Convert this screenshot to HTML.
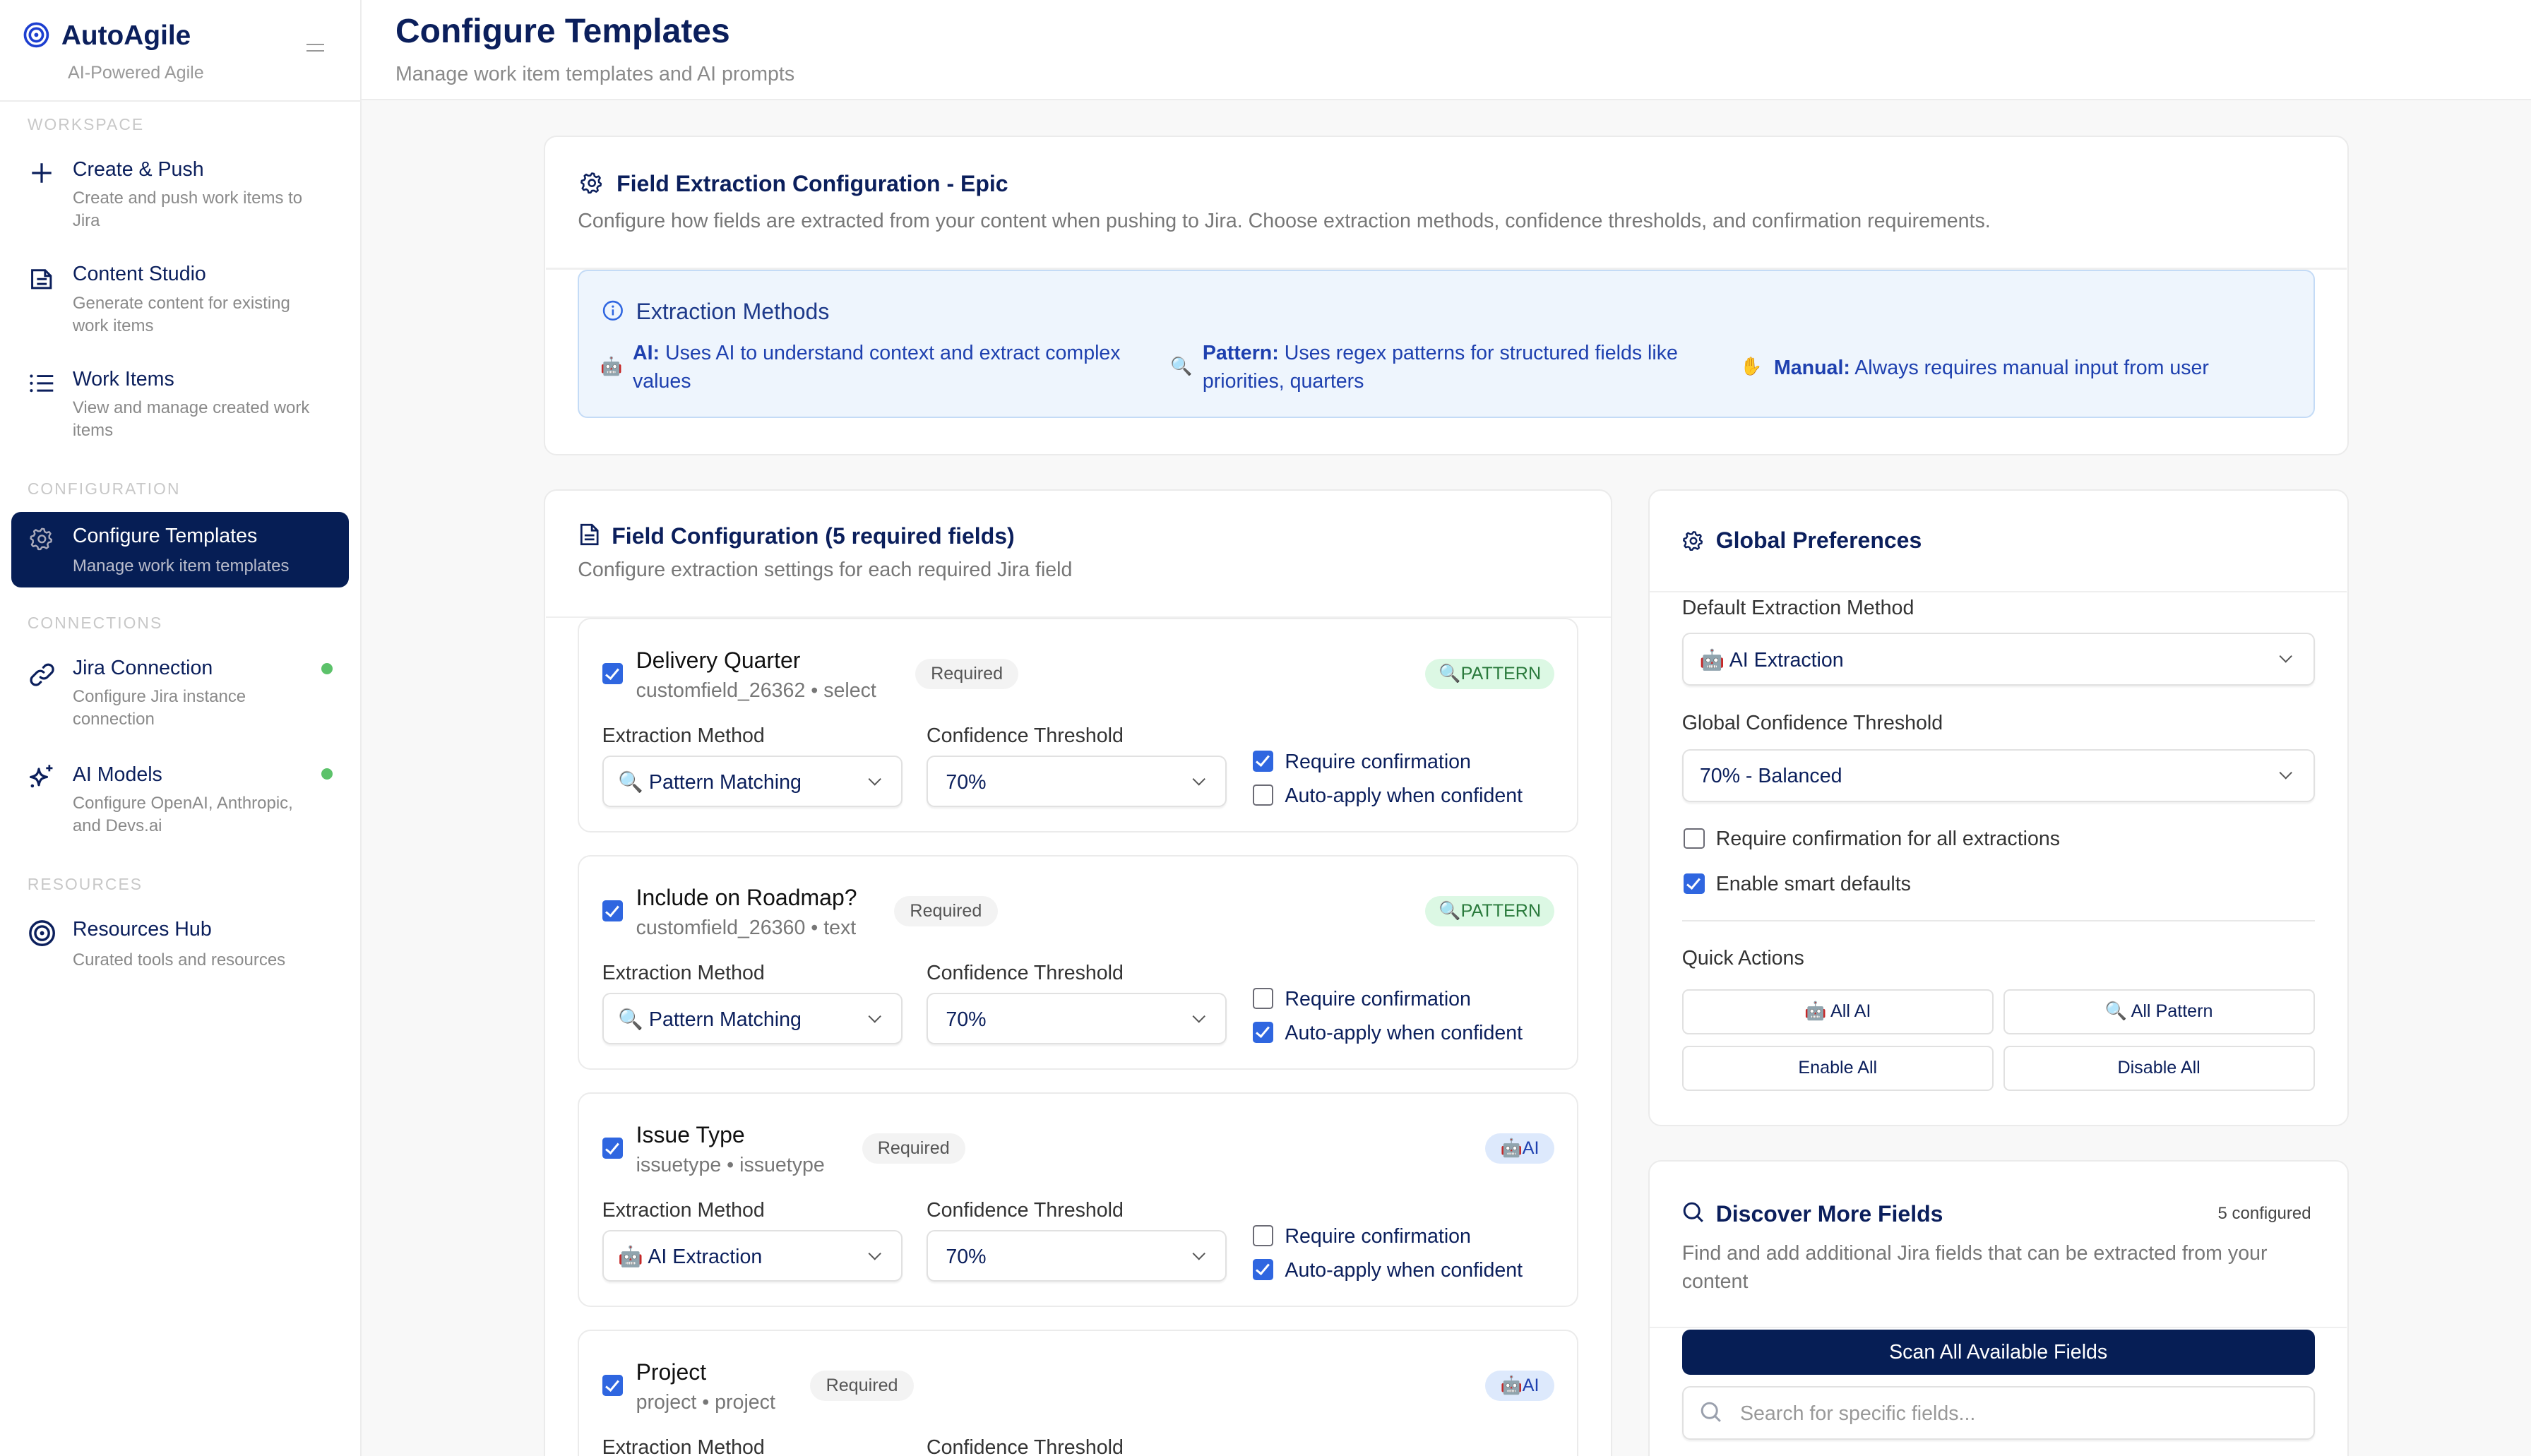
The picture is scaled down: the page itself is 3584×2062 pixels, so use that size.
<!DOCTYPE html>
<html><head><meta charset="utf-8">
<style>
html{margin:0;padding:0;width:3584px;height:2062px;overflow:hidden}
body{margin:0;padding:0;width:1568px;height:902px;overflow:hidden;position:relative;background:#f8f8f8;font-family:"Liberation Sans",sans-serif;zoom:2.2857;color:#0b1f5c}
.a{position:absolute;white-space:nowrap;line-height:16px}
.box{position:absolute;box-sizing:border-box}
.card{position:absolute;background:#fff;border:1px solid #ebebeb;border-radius:8px;box-sizing:border-box}
.gray{color:#8a8a8a}
.cb{position:absolute;width:13px;height:13px;box-sizing:border-box;border-radius:2px}
.on{background:#2f66e0}
.on::after{content:"";position:absolute;left:4px;top:1.5px;width:3px;height:7px;border:solid #fff;border-width:0 1.6px 1.6px 0;transform:rotate(40deg)}
.off{border:1.3px solid #6b6b75;background:#fff}
.sel{position:absolute;background:#fff;border:1px solid #e1e1e1;border-radius:5px;box-sizing:border-box;box-shadow:0 1px 1px rgba(0,0,0,.06)}
.chev{position:absolute;width:5px;height:5px;border:solid #555;border-width:0 1.3px 1.3px 0;transform:rotate(45deg)}
.pill{position:absolute;border-radius:10px;font-size:11px;line-height:19px;text-align:center}
.lbl{font-size:10px;letter-spacing:.9px;color:#c8c8c8}
.btn{position:absolute;background:#fff;border:1px solid #e1e1e1;border-radius:4px;box-sizing:border-box;text-align:center;font-size:11px;line-height:26px;color:#0b1f5c}
#wrap{position:absolute;left:0;top:0;width:1568px;height:902px;overflow:hidden}
</style></head><body><div id="wrap">

<!-- sidebar -->
<div class="box" style="left:0;top:0;width:224px;height:902px;background:#fff;border-right:1px solid #ececec"></div>
<div class="box" style="left:0;top:62px;width:224px;height:1px;background:#ededed"></div>
<svg class="box" style="left:14px;top:13px" width="17" height="17" viewBox="0 0 17 17"><circle cx="8.5" cy="8.5" r="7" fill="none" stroke="#1d3fd0" stroke-width="1.6"/><circle cx="8.5" cy="8.5" r="4" fill="none" stroke="#1d3fd0" stroke-width="1.6"/><circle cx="8.5" cy="8.5" r="1.3" fill="#1d3fd0"/></svg>
<div class="a" style="left:38px;top:13px;font-size:17px;line-height:18px;font-weight:bold;color:#0b1f5c">AutoAgile</div>
<div class="a gray" style="left:42px;top:37px;font-size:11px;color:#999">AI-Powered Agile</div>
<div class="box" style="left:190px;top:27px;width:11px;height:1px;background:#999"></div>
<div class="box" style="left:190px;top:31px;width:11px;height:1px;background:#999"></div>

<div class="a lbl" style="left:17px;top:69px">WORKSPACE</div>
<svg class="box" style="left:19px;top:100px" width="14" height="14"><path d="M7 1v12M1 7h12" stroke="#0b1f5c" stroke-width="1.4"/></svg>
<div class="a" style="left:45px;top:97px;font-size:12.5px">Create &amp; Push</div>
<div class="a gray" style="left:45px;top:116px;font-size:10.5px;line-height:14px;white-space:normal;width:155px">Create and push work items to Jira</div>
<svg class="box" style="left:18px;top:165px" width="16" height="16" viewBox="0 0 16 16"><path d="M2 2.5h8l3.5 3.5v7.5h-11.5z M10 2.5v3.5h3.5 M5 8h6 M5 11h6" fill="none" stroke="#0b1f5c" stroke-width="1.3"/></svg>
<div class="a" style="left:45px;top:162px;font-size:12.5px">Content Studio</div>
<div class="a gray" style="left:45px;top:181px;font-size:10.5px;line-height:14px;white-space:normal;width:155px">Generate content for existing work items</div>
<svg class="box" style="left:18px;top:231px" width="16" height="14"><circle cx="1.5" cy="2" r=".9" fill="#0b1f5c"/><circle cx="1.5" cy="6.5" r=".9" fill="#0b1f5c"/><circle cx="1.5" cy="11" r=".9" fill="#0b1f5c"/><path d="M5 2h10M5 6.5h10M5 11h10" stroke="#0b1f5c" stroke-width="1.3"/></svg>
<div class="a" style="left:45px;top:227px;font-size:12.5px">Work Items</div>
<div class="a gray" style="left:45px;top:246px;font-size:10.5px;line-height:14px;white-space:normal;width:160px">View and manage created work items</div>

<div class="a lbl" style="left:17px;top:295px">CONFIGURATION</div>
<div class="box" style="left:7px;top:317px;width:209px;height:47px;background:#061e55;border-radius:6px"></div>
<svg class="box" style="left:18px;top:326px" width="16" height="16" viewBox="0 0 24 24"><path d="M12 2.5l2 .3.6 2.4 1.7 1 2.4-.8 1.3 1.6-1.2 2.2.1 2 2 1.4-.3 2-2.4.7-1 1.7.7 2.4-1.6 1.3-2.2-1.2-2 .1-1.4 2h-2l-.7-2.4-1.7-1-2.4.7-1.3-1.6 1.2-2.2-.1-2-2-1.4.3-2 2.4-.7 1-1.7-.7-2.4 1.6-1.3 2.2 1.2 2-.1z" fill="none" stroke="#aab" stroke-width="1.6" stroke-linejoin="round"/><circle cx="12" cy="12" r="3.2" fill="none" stroke="#aab" stroke-width="1.6"/></svg>
<div class="a" style="left:45px;top:324px;font-size:12.5px;color:#fff">Configure Templates</div>
<div class="a" style="left:45px;top:343px;font-size:10.5px;color:#b9bccb">Manage work item templates</div>

<div class="a lbl" style="left:17px;top:378px">CONNECTIONS</div>
<svg class="box" style="left:17px;top:409px" width="18" height="18" viewBox="0 0 18 18"><path d="M8 10.5a3 3 0 0 0 4.2 0l3-3a3 3 0 0 0-4.2-4.2l-1.2 1.2 M10 7.5a3 3 0 0 0-4.2 0l-3 3a3 3 0 0 0 4.2 4.2l1.2-1.2" fill="none" stroke="#0b1f5c" stroke-width="1.4" stroke-linecap="round"/></svg>
<div class="a" style="left:45px;top:406px;font-size:12.5px">Jira Connection</div>
<div class="a gray" style="left:45px;top:425px;font-size:10.5px;line-height:14px;white-space:normal;width:150px">Configure Jira instance connection</div>
<div class="box" style="left:199px;top:411px;width:7px;height:7px;border-radius:50%;background:#5cc26a"></div>
<svg class="box" style="left:17px;top:473px" width="18" height="18" viewBox="0 0 18 18"><path d="M7 3.5c.6 3.3 1.6 4.3 5 5-3.4.6-4.4 1.6-5 5-.6-3.4-1.6-4.4-5-5 3.4-.7 4.4-1.7 5-5z" fill="none" stroke="#0b1f5c" stroke-width="1.4" stroke-linejoin="round"/><path d="M13.5 1v4M11.5 3h4" stroke="#0b1f5c" stroke-width="1.2"/><circle cx="3" cy="14" r="1" fill="#0b1f5c"/></svg>
<div class="a" style="left:45px;top:472px;font-size:12.5px">AI Models</div>
<div class="a gray" style="left:45px;top:491px;font-size:10.5px;line-height:14px;white-space:normal;width:152px">Configure OpenAI, Anthropic, and Devs.ai</div>
<div class="box" style="left:199px;top:476px;width:7px;height:7px;border-radius:50%;background:#5cc26a"></div>

<div class="a lbl" style="left:17px;top:540px">RESOURCES</div>
<svg class="box" style="left:17px;top:569px" width="18" height="18" viewBox="0 0 18 18"><circle cx="9" cy="9" r="7.3" fill="none" stroke="#0b1f5c" stroke-width="1.5"/><circle cx="9" cy="9" r="4.2" fill="none" stroke="#0b1f5c" stroke-width="1.5"/><circle cx="9" cy="9" r="1.3" fill="#0b1f5c"/></svg>
<div class="a" style="left:45px;top:568px;font-size:12.5px">Resources Hub</div>
<div class="a gray" style="left:45px;top:587px;font-size:10.5px">Curated tools and resources</div>

<!-- header -->
<div class="box" style="left:224px;top:0;width:1344px;height:62px;background:#fff;border-bottom:1px solid #ececec"></div>
<div class="a" style="left:245px;top:8px;font-size:21px;line-height:24px;font-weight:bold">Configure Templates</div>
<div class="a" style="left:245px;top:38px;font-size:12.5px;color:#8a8a8a">Manage work item templates and AI prompts</div>

<!-- card 1 -->
<div class="card" style="left:337px;top:84px;width:1118px;height:198px"></div>
<div class="box" style="left:338px;top:166px;width:1116px;height:1px;background:#efefef"></div>
<svg class="box" style="left:359px;top:106px" width="15" height="15" viewBox="0 0 24 24"><path d="M12 2.5l2 .3.6 2.4 1.7 1 2.4-.8 1.3 1.6-1.2 2.2.1 2 2 1.4-.3 2-2.4.7-1 1.7.7 2.4-1.6 1.3-2.2-1.2-2 .1-1.4 2h-2l-.7-2.4-1.7-1-2.4.7-1.3-1.6 1.2-2.2-.1-2-2-1.4.3-2 2.4-.7 1-1.7-.7-2.4 1.6-1.3 2.2 1.2 2-.1z" fill="none" stroke="#0b1f5c" stroke-width="1.8" stroke-linejoin="round"/><circle cx="12" cy="12" r="3.2" fill="none" stroke="#0b1f5c" stroke-width="1.8"/></svg>
<div class="a" style="left:382px;top:106px;font-size:14px;font-weight:bold">Field Extraction Configuration - Epic</div>
<div class="a" style="left:358px;top:129px;font-size:12.5px;color:#777">Configure how fields are extracted from your content when pushing to Jira. Choose extraction methods, confidence thresholds, and confirmation requirements.</div>
<div class="box" style="left:358px;top:167px;width:1076px;height:92px;background:#eef5fd;border:1px solid #c4dbf6;border-radius:6px"></div>
<svg class="box" style="left:373px;top:186px" width="13" height="13"><circle cx="6.5" cy="6.5" r="5.6" fill="none" stroke="#2f66e0" stroke-width="1.1"/><path d="M6.5 5.8v3.6" stroke="#2f66e0" stroke-width="1.1"/><circle cx="6.5" cy="4" r=".7" fill="#2f66e0"/></svg>
<div class="a" style="left:394px;top:185px;font-size:14px;color:#1e3a8a">Extraction Methods</div>
<div class="a" style="left:372px;top:219px;font-size:11px">🤖</div>
<div class="a" style="left:392px;top:210px;font-size:12.5px;line-height:17.5px;color:#1e40af;white-space:normal;width:330px"><b>AI:</b> Uses AI to understand context and extract complex values</div>
<div class="a" style="left:725px;top:219px;font-size:11px">🔍</div>
<div class="a" style="left:745px;top:210px;font-size:12.5px;line-height:17.5px;color:#1e40af;white-space:normal;width:320px"><b>Pattern:</b> Uses regex patterns for structured fields like priorities, quarters</div>
<div class="a" style="left:1078px;top:219px;font-size:11px">✋</div>
<div class="a" style="left:1099px;top:220px;font-size:12.5px;color:#1e40af"><b>Manual:</b> Always requires manual input from user</div>

<!-- card 2 -->
<div class="card" style="left:337px;top:303px;width:662px;height:620px"></div>
<div class="box" style="left:338px;top:382px;width:660px;height:1px;background:#efefef"></div>
<svg class="box" style="left:359px;top:324px" width="12" height="14" viewBox="0 0 12 14"><path d="M1 1h6.5l3.5 3.5v8.5h-10z M7.5 1v3.5h3.5 M3 7.5h6 M3 10h6" fill="none" stroke="#0b1f5c" stroke-width="1.2"/></svg>
<div class="a" style="left:379px;top:324px;font-size:14px;font-weight:bold">Field Configuration (5 required fields)</div>
<div class="a" style="left:358px;top:345px;font-size:12.5px;color:#777">Configure extraction settings for each required Jira field</div>

<!-- field cards -->
<div class="card" style="left:358px;top:383px;width:620px;height:133px"></div>
<div class="cb on" style="left:373px;top:411px"></div>
<div class="a" style="left:394px;top:401px;font-size:14px;color:#111">Delivery Quarter</div>
<div class="a" style="left:394px;top:420px;font-size:12.5px;color:#777">customfield_26362 • select</div>
<div class="pill" style="left:567px;top:408px;width:64px;background:#f3f3f3;color:#555">Required</div>
<div class="pill" style="left:883px;top:408px;width:80px;background:#dcf8e4;color:#2a7a3c">🔍PATTERN</div>
<div class="a" style="left:373px;top:448px;font-size:12.5px;color:#333">Extraction Method</div>
<div class="a" style="left:574px;top:448px;font-size:12.5px;color:#333">Confidence Threshold</div>
<div class="sel" style="left:373px;top:468px;width:186px;height:32px"></div><div class="a" style="left:383px;top:477px;font-size:12.5px">🔍 Pattern Matching</div><div class="chev" style="left:539px;top:480px"></div>
<div class="sel" style="left:574px;top:468px;width:186px;height:32px"></div><div class="a" style="left:586px;top:477px;font-size:12.5px">70%</div><div class="chev" style="left:740px;top:480px"></div>
<div class="cb on" style="left:776px;top:465px"></div><div class="a" style="left:796px;top:464px;font-size:12.5px">Require confirmation</div>
<div class="cb off" style="left:776px;top:486px"></div><div class="a" style="left:796px;top:485px;font-size:12.5px">Auto-apply when confident</div>

<div class="card" style="left:358px;top:530px;width:620px;height:133px"></div>
<div class="cb on" style="left:373px;top:558px"></div>
<div class="a" style="left:394px;top:548px;font-size:14px;color:#111">Include on Roadmap?</div>
<div class="a" style="left:394px;top:567px;font-size:12.5px;color:#777">customfield_26360 • text</div>
<div class="pill" style="left:554px;top:555px;width:64px;background:#f3f3f3;color:#555">Required</div>
<div class="pill" style="left:883px;top:555px;width:80px;background:#dcf8e4;color:#2a7a3c">🔍PATTERN</div>
<div class="a" style="left:373px;top:595px;font-size:12.5px;color:#333">Extraction Method</div>
<div class="a" style="left:574px;top:595px;font-size:12.5px;color:#333">Confidence Threshold</div>
<div class="sel" style="left:373px;top:615px;width:186px;height:32px"></div><div class="a" style="left:383px;top:624px;font-size:12.5px">🔍 Pattern Matching</div><div class="chev" style="left:539px;top:627px"></div>
<div class="sel" style="left:574px;top:615px;width:186px;height:32px"></div><div class="a" style="left:586px;top:624px;font-size:12.5px">70%</div><div class="chev" style="left:740px;top:627px"></div>
<div class="cb off" style="left:776px;top:612px"></div><div class="a" style="left:796px;top:611px;font-size:12.5px">Require confirmation</div>
<div class="cb on" style="left:776px;top:633px"></div><div class="a" style="left:796px;top:632px;font-size:12.5px">Auto-apply when confident</div>

<div class="card" style="left:358px;top:677px;width:620px;height:133px"></div>
<div class="cb on" style="left:373px;top:705px"></div>
<div class="a" style="left:394px;top:695px;font-size:14px;color:#111">Issue Type</div>
<div class="a" style="left:394px;top:714px;font-size:12.5px;color:#777">issuetype • issuetype</div>
<div class="pill" style="left:534px;top:702px;width:64px;background:#f3f3f3;color:#555">Required</div>
<div class="pill" style="left:920px;top:702px;width:43px;background:#dde9fc;color:#1e40af">🤖AI</div>
<div class="a" style="left:373px;top:742px;font-size:12.5px;color:#333">Extraction Method</div>
<div class="a" style="left:574px;top:742px;font-size:12.5px;color:#333">Confidence Threshold</div>
<div class="sel" style="left:373px;top:762px;width:186px;height:32px"></div><div class="a" style="left:383px;top:771px;font-size:12.5px">🤖 AI Extraction</div><div class="chev" style="left:539px;top:774px"></div>
<div class="sel" style="left:574px;top:762px;width:186px;height:32px"></div><div class="a" style="left:586px;top:771px;font-size:12.5px">70%</div><div class="chev" style="left:740px;top:774px"></div>
<div class="cb off" style="left:776px;top:759px"></div><div class="a" style="left:796px;top:758px;font-size:12.5px">Require confirmation</div>
<div class="cb on" style="left:776px;top:780px"></div><div class="a" style="left:796px;top:779px;font-size:12.5px">Auto-apply when confident</div>

<div class="card" style="left:358px;top:824px;width:620px;height:110px"></div>
<div class="cb on" style="left:373px;top:852px"></div>
<div class="a" style="left:394px;top:842px;font-size:14px;color:#111">Project</div>
<div class="a" style="left:394px;top:861px;font-size:12.5px;color:#777">project • project</div>
<div class="pill" style="left:502px;top:849px;width:64px;background:#f3f3f3;color:#555">Required</div>
<div class="pill" style="left:920px;top:849px;width:43px;background:#dde9fc;color:#1e40af">🤖AI</div>
<div class="a" style="left:373px;top:889px;font-size:12.5px;color:#333">Extraction Method</div>
<div class="a" style="left:574px;top:889px;font-size:12.5px;color:#333">Confidence Threshold</div>

<!-- card 3 -->
<div class="card" style="left:1021px;top:303px;width:434px;height:395px"></div>
<div class="box" style="left:1022px;top:366px;width:432px;height:1px;background:#efefef"></div>
<svg class="box" style="left:1042px;top:328px" width="14" height="14" viewBox="0 0 24 24"><path d="M12 2.5l2 .3.6 2.4 1.7 1 2.4-.8 1.3 1.6-1.2 2.2.1 2 2 1.4-.3 2-2.4.7-1 1.7.7 2.4-1.6 1.3-2.2-1.2-2 .1-1.4 2h-2l-.7-2.4-1.7-1-2.4.7-1.3-1.6 1.2-2.2-.1-2-2-1.4.3-2 2.4-.7 1-1.7-.7-2.4 1.6-1.3 2.2 1.2 2-.1z" fill="none" stroke="#0b1f5c" stroke-width="1.8" stroke-linejoin="round"/><circle cx="12" cy="12" r="3.2" fill="none" stroke="#0b1f5c" stroke-width="1.8"/></svg>
<div class="a" style="left:1063px;top:327px;font-size:14px;font-weight:bold">Global Preferences</div>
<div class="a" style="left:1042px;top:369px;font-size:12.5px;color:#333">Default Extraction Method</div>
<div class="sel" style="left:1042px;top:392px;width:392px;height:33px"></div><div class="a" style="left:1053px;top:401px;font-size:12.5px">🤖 AI Extraction</div><div class="chev" style="left:1413px;top:404px"></div>
<div class="a" style="left:1042px;top:440px;font-size:12.5px;color:#333">Global Confidence Threshold</div>
<div class="sel" style="left:1042px;top:464px;width:392px;height:33px"></div><div class="a" style="left:1053px;top:473px;font-size:12.5px">70% - Balanced</div><div class="chev" style="left:1413px;top:476px"></div>
<div class="cb off" style="left:1043px;top:513px"></div><div class="a" style="left:1063px;top:512px;font-size:12.5px;color:#333">Require confirmation for all extractions</div>
<div class="cb on" style="left:1043px;top:541px"></div><div class="a" style="left:1063px;top:540px;font-size:12.5px;color:#333">Enable smart defaults</div>
<div class="box" style="left:1042px;top:570px;width:392px;height:1px;background:#e8e8e8"></div>
<div class="a" style="left:1042px;top:586px;font-size:12.5px;color:#333">Quick Actions</div>
<div class="btn" style="left:1042px;top:613px;width:193px;height:28px">🤖 All AI</div>
<div class="btn" style="left:1241px;top:613px;width:193px;height:28px">🔍 All Pattern</div>
<div class="btn" style="left:1042px;top:648px;width:193px;height:28px">Enable All</div>
<div class="btn" style="left:1241px;top:648px;width:193px;height:28px">Disable All</div>

<!-- card 4 -->
<div class="card" style="left:1021px;top:719px;width:434px;height:230px"></div>
<div class="box" style="left:1022px;top:822px;width:432px;height:1px;background:#efefef"></div>
<svg class="box" style="left:1042px;top:744px" width="14" height="14"><circle cx="6" cy="6" r="4.6" fill="none" stroke="#0b1f5c" stroke-width="1.3"/><path d="M9.4 9.4l3.2 3.2" stroke="#0b1f5c" stroke-width="1.3"/></svg>
<div class="a" style="left:1063px;top:744px;font-size:14px;font-weight:bold">Discover More Fields</div>
<div class="a" style="left:1374px;top:744px;font-size:10.5px;color:#444">5 configured</div>
<div class="a" style="left:1042px;top:768px;font-size:12.5px;line-height:17.5px;color:#777;white-space:normal;width:390px">Find and add additional Jira fields that can be extracted from your content</div>
<div class="box" style="left:1042px;top:824px;width:392px;height:28px;background:#061e55;border-radius:5px;color:#fff;font-size:12.5px;line-height:28px;text-align:center">Scan All Available Fields</div>
<div class="sel" style="left:1042px;top:859px;width:392px;height:33px"></div>
<svg class="box" style="left:1053px;top:868px" width="14" height="14"><circle cx="6" cy="6" r="4.6" fill="none" stroke="#9aa0ad" stroke-width="1.3"/><path d="M9.4 9.4l3.2 3.2" stroke="#9aa0ad" stroke-width="1.3"/></svg>
<div class="a" style="left:1078px;top:868px;font-size:12.5px;color:#999">Search for specific fields...</div>

</div></body></html>
